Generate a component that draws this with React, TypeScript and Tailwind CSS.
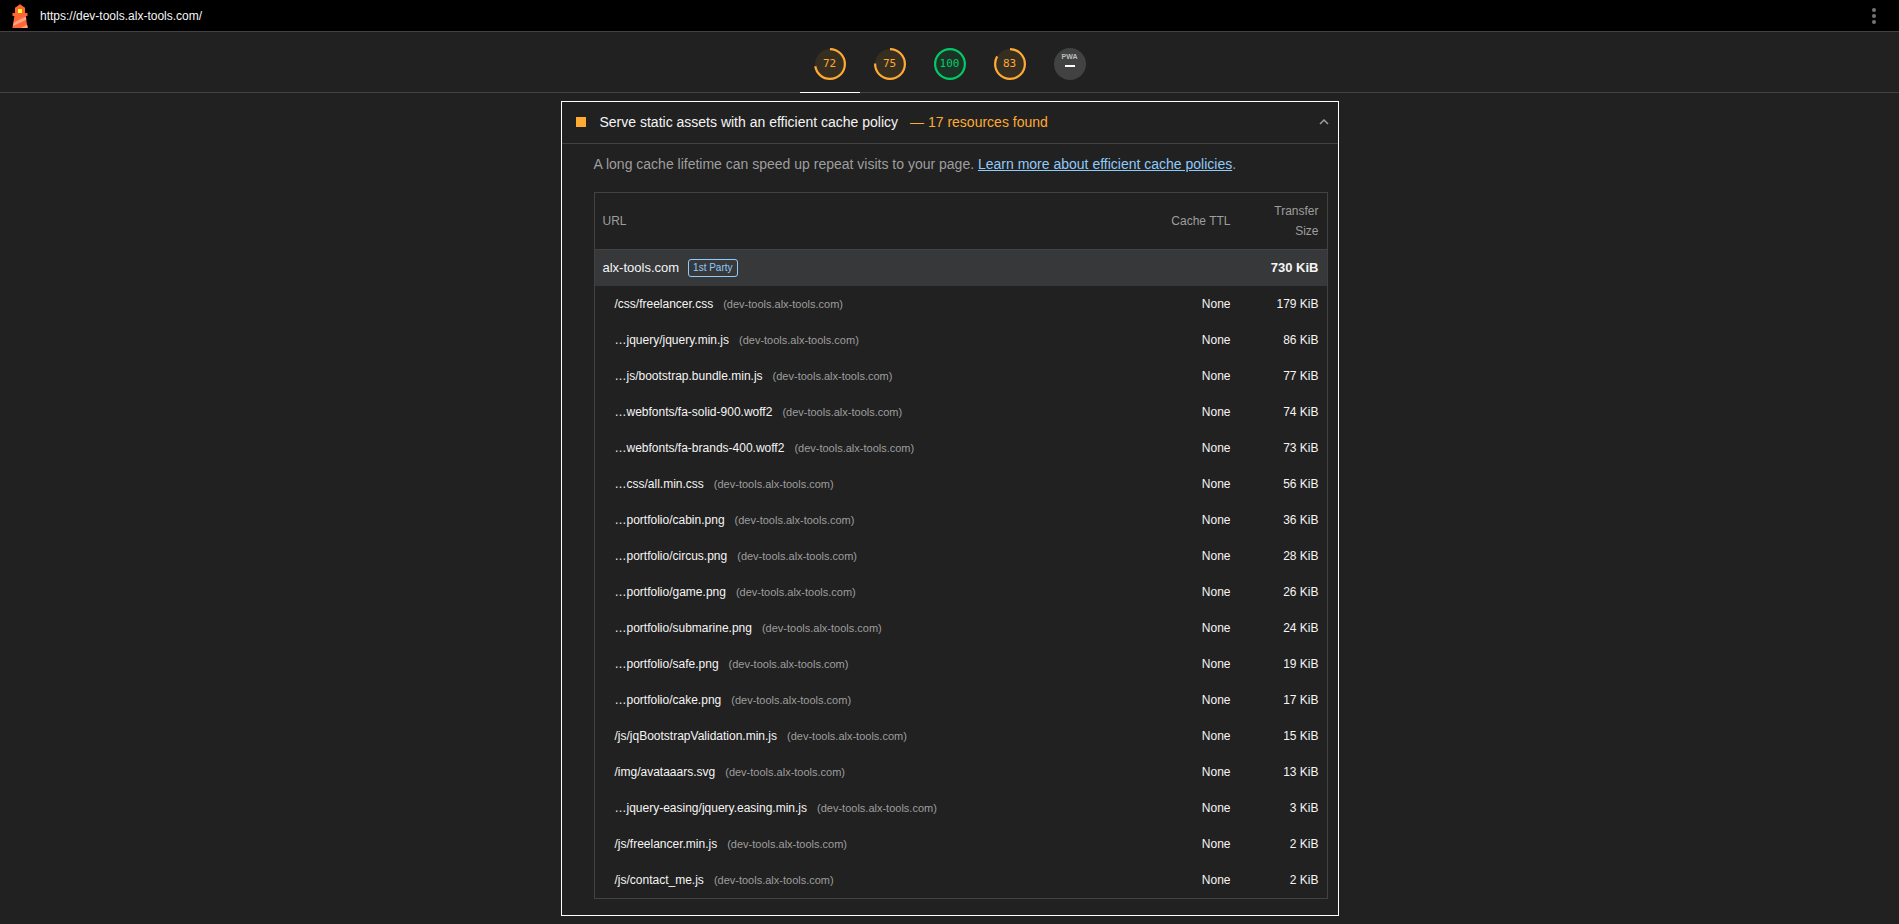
const HOST = "(dev-tools.alx-tools.com)";

const resources: [string, string][] = [
  ["/css/freelancer.css", "179 KiB"],
  ["…jquery/jquery.min.js", "86 KiB"],
  ["…js/bootstrap.bundle.min.js", "77 KiB"],
  ["…webfonts/fa-solid-900.woff2", "74 KiB"],
  ["…webfonts/fa-brands-400.woff2", "73 KiB"],
  ["…css/all.min.css", "56 KiB"],
  ["…portfolio/cabin.png", "36 KiB"],
  ["…portfolio/circus.png", "28 KiB"],
  ["…portfolio/game.png", "26 KiB"],
  ["…portfolio/submarine.png", "24 KiB"],
  ["…portfolio/safe.png", "19 KiB"],
  ["…portfolio/cake.png", "17 KiB"],
  ["/js/jqBootstrapValidation.min.js", "15 KiB"],
  ["/img/avataaars.svg", "13 KiB"],
  ["…jquery-easing/jquery.easing.min.js", "3 KiB"],
  ["/js/freelancer.min.js", "2 KiB"],
  ["/js/contact_me.js", "2 KiB"],
];

const categories = [
  { label: "Performance", score: 72, active: true },
  { label: "Accessibility", score: 75, active: false },
  { label: "Best Practices", score: 100, active: false },
  { label: "SEO", score: 83, active: false },
];

function Lighthouse() {
  return (
    <svg viewBox="0 0 24 24" className="size-6" aria-hidden="true">
      <path d="M12 0.3 L17 3.8 V9 H19.5 V12 H17.6 L19.6 24 H4.4 L6.4 12 H4.5 V9 H7 V3.8 Z" fill="#f63" />
      <path d="M5.9 18.4 L17.8 12.6 L18.4 15.8 L5 22 Z M12.5 24 L19.2 20.8 L19.7 24 Z" fill="#ffa385" />
      <rect x="10" y="5" width="4" height="4" fill="#ff3" />
    </svg>
  );
}

function Gauge({ score }: { score: number }) {
  const radius = 14.9;
  const circumference = 2 * Math.PI * radius;
  const full = score >= 90;
  return (
    <span className={`relative grid size-8 place-items-center ${full ? "text-[#00cc66]" : "text-[#ffaa33]"}`}>
      <svg viewBox="0 0 32 32" className="absolute inset-0 size-8" aria-hidden="true">
        <circle cx="16" cy="16" r={radius} fill="currentColor" fillOpacity="0.1" />
        <circle
          cx="16"
          cy="16"
          r={radius}
          fill="none"
          stroke="currentColor"
          strokeWidth="2.2"
          strokeDasharray={`${(circumference * score) / 100} ${circumference}`}
          transform="rotate(-90 16 16)"
        />
      </svg>
      <span className="font-['DejaVu_Sans_Mono',monospace] text-[11px] leading-4">{score}</span>
    </span>
  );
}

export default function App() {
  return (
    <div className="min-h-screen bg-[#212121] font-['Liberation_Sans',Arial,sans-serif] text-[#f5f5f5]">
      <header className="flex h-8 items-center border-b border-[#424242] bg-black pr-[7px] pl-2">
        <Lighthouse />
        <a href="https://dev-tools.alx-tools.com/" className="ml-2 text-xs">
          https://dev-tools.alx-tools.com/
        </a>
        <button type="button" aria-label="Tools menu" className="ml-auto grid h-8 w-9 place-items-center">
          <svg viewBox="0 0 24 24" className="size-6" fill="#757575" aria-hidden="true">
            <circle cx="12" cy="6" r="2" />
            <circle cx="12" cy="12" r="2" />
            <circle cx="12" cy="18" r="2" />
          </svg>
        </button>
      </header>

      <nav className="flex h-[61px] justify-center border-b border-[#424242]">
        {categories.map((c) => (
          <a
            key={c.label}
            href="#audits"
            aria-label={c.label}
            className={`flex h-[61px] w-[60px] justify-center border-b pt-4 ${c.active ? "border-white" : "border-transparent"}`}
          >
            <Gauge score={c.score} />
          </a>
        ))}
        <a href="#audits" aria-label="Progressive Web App" className="flex w-[60px] justify-center pt-4">
          <span className="flex size-8 flex-col items-center rounded-full bg-[#424242] pt-[6px]">
            <span className="text-[7px] font-bold leading-[6px] text-[#bdbdbd]">PWA</span>
            <span className="mt-[5px] h-[2px] w-[10px] bg-white" />
          </span>
        </a>
      </nav>

      <main id="audits" className="px-4 pt-2 pb-2">
        <section className="mx-auto max-w-[778px] border border-white">
          <button type="button" aria-expanded="true" className="flex h-[42px] w-full items-center border-b border-[#424242] pr-2 pb-px pl-[14px] text-left text-sm">
            <span className="size-[10px] bg-[#ffaa33]" />
            <span className="ml-[14px]">Serve static assets with an efficient cache policy</span>
            <span className="ml-3 text-[#ffaa33]">— 17 resources found</span>
            <svg viewBox="0 0 12 12" className="ml-auto size-3" fill="none" stroke="#9e9e9e" strokeWidth="1.5" aria-hidden="true">
              <path d="M2 8 L6 4 L10 8" />
            </svg>
          </button>
          <div className="pr-[10px] pb-4 pl-8">
            <p className="py-[10px] text-sm text-[#9e9e9e]">
              A long cache lifetime can speed up repeat visits to your page.{" "}
              <a href="#cache" className="text-[#90caf9] underline">
                Learn more about efficient cache policies
              </a>
              .
            </p>
            <table className="mt-2 w-full border-separate border-spacing-0 border border-[#424242] text-xs">
              <thead className="text-[#9e9e9e]">
                <tr className="h-[57px]">
                  <th className="border-b border-[#424242] px-2 text-left font-normal">URL</th>
                  <th className="w-[100px] border-b border-[#424242] px-2 text-right font-normal">Cache TTL</th>
                  <th className="w-[88px] border-b border-[#424242] pr-2 pl-7 text-right leading-5 font-normal">Transfer Size</th>
                </tr>
              </thead>
              <tbody>
                <tr className="h-9 bg-[#37383a] text-[13px]">
                  <td className="px-2">
                    <span className="flex items-center">
                      <a href="#alx-tools">alx-tools.com</a>
                      <span className="ml-[9px] rounded-[3px] border border-[#90caf9] px-1 text-[10px] leading-4 text-[#90caf9]">1st Party</span>
                    </span>
                  </td>
                  <td />
                  <td className="px-2 text-right font-bold">730 KiB</td>
                </tr>
                {resources.map(([path, size]) => (
                  <tr key={path} className="h-9">
                    <td className="pr-2 pl-5">
                      <a href="#resource">{path}</a>
                      <span className="ml-[10px] text-[11px] text-[#9e9e9e]">{HOST}</span>
                    </td>
                    <td className="px-2 text-right">None</td>
                    <td className="px-2 text-right">{size}</td>
                  </tr>
                ))}
              </tbody>
            </table>
          </div>
        </section>
      </main>
    </div>
  );
}
